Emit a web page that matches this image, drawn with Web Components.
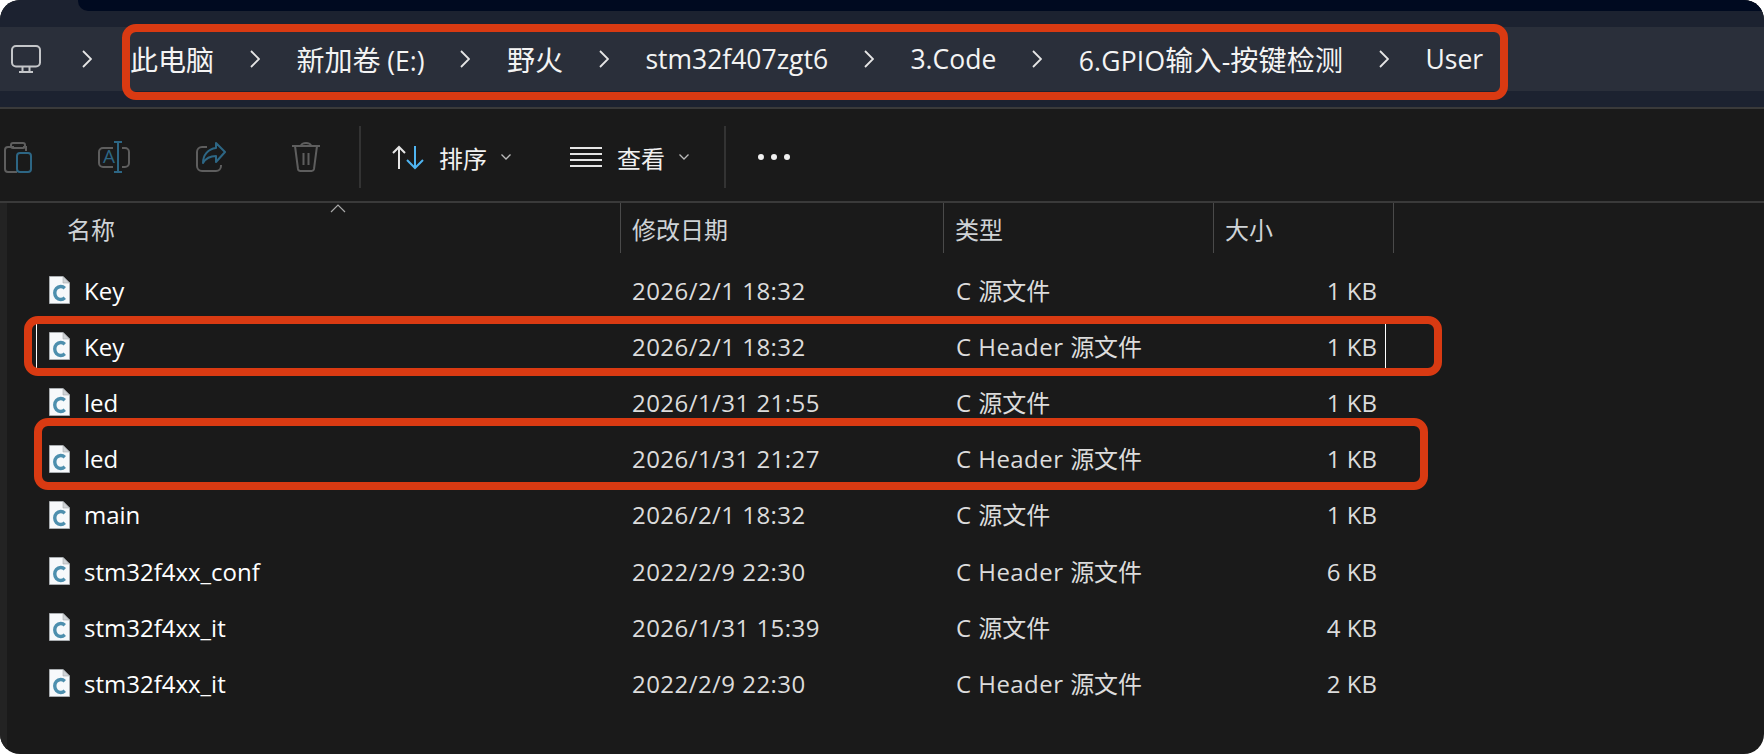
<!doctype html>
<html lang="zh">
<head>
<meta charset="utf-8">
<title>User</title>
<style>
  html, body { margin: 0; background: #fff; }
  body { font-family: "Open Sans", "Noto Sans CJK SC", sans-serif; }
</style>
</head>
<body>
<ex-window>
  <ex-address slot="address">
    <ex-crumb><span class="c">此电脑</span></ex-crumb>
    <ex-crumb><span class="c">新加卷</span> (E:)</ex-crumb>
    <ex-crumb><span class="c">野火</span></ex-crumb>
    <ex-crumb>stm32f407zgt6</ex-crumb>
    <ex-crumb>3.Code</ex-crumb>
    <ex-crumb style="letter-spacing:.2px">6.GPIO<span class="c">输入</span>-<span class="c">按键检测</span></ex-crumb>
    <ex-crumb last>User</ex-crumb>
  </ex-address>
  <ex-toolbar slot="toolbar"></ex-toolbar>
  <ex-files slot="files">
    <ex-row name="Key" date="2026/2/1 18:32" type="C" size="1 KB"></ex-row>
    <ex-row name="Key" date="2026/2/1 18:32" type="C Header" size="1 KB" focused></ex-row>
    <ex-row name="led" date="2026/1/31 21:55" type="C" size="1 KB"></ex-row>
    <ex-row name="led" date="2026/1/31 21:27" type="C Header" size="1 KB"></ex-row>
    <ex-row name="main" date="2026/2/1 18:32" type="C" size="1 KB"></ex-row>
    <ex-row name="stm32f4xx_conf" date="2022/2/9 22:30" type="C Header" size="6 KB"></ex-row>
    <ex-row name="stm32f4xx_it" date="2026/1/31 15:39" type="C" size="4 KB"></ex-row>
    <ex-row name="stm32f4xx_it" date="2022/2/9 22:30" type="C Header" size="2 KB"></ex-row>
  </ex-files>
  <ex-mark slot="marks" x="122" y="24" w="1386" h="76"></ex-mark>
  <ex-mark slot="marks" x="24" y="316" w="1418" h="60"></ex-mark>
  <ex-mark slot="marks" x="34" y="418" w="1394" h="72"></ex-mark>
</ex-window>

<script>
const CJK = '"Noto Sans CJK SC", sans-serif';

class ExWindow extends HTMLElement {
  constructor() {
    super();
    this.attachShadow({ mode: "open" });
    this.shadowRoot.innerHTML = `
      <style>
        :host { display: block; position: relative; width: 1764px; height: 754px; overflow: hidden; border-radius: 20px; background: #1a1a1a; }
        .head { height: 107px; background: #1c2230; }
        .strip { height: 11px; margin-left: 78px; background: #000a20; border-bottom-left-radius: 10px; }
      </style>
      <div class="head">
        <div class="strip"></div>
        <slot name="address"></slot>
      </div>
      <slot name="toolbar"></slot>
      <slot name="files"></slot>
      <slot name="marks"></slot>
    `;
  }
}

class ExAddress extends HTMLElement {
  constructor() {
    super();
    this.attachShadow({ mode: "open" });
    this.shadowRoot.innerHTML = `
      <style>
        :host { display: flex; align-items: center; height: 64px; margin-top: 16px; padding-left: 11px; background: #2a2f3a; }
        .pc { display: block; width: 30px; height: 28px; margin-right: 41px; }
        .chev { display: block; width: 10px; height: 18px; margin-right: 38px; }
      </style>
      <svg class="pc" viewBox="0 0 30 28" fill="none" stroke="#c4c6c9" stroke-width="2">
        <rect x="1" y="1" width="28" height="20.5" rx="4"/>
        <path d="M11.5 22v4M18.5 22v4M8 27h14"/>
      </svg>
      <svg class="chev" viewBox="0 0 10 18" fill="none" stroke="#e6e6e6" stroke-width="1.8"><path d="M1 1l8 8-8 8"/></svg>
      <slot></slot>
    `;
  }
}

class ExCrumb extends HTMLElement {
  constructor() {
    super();
    this.attachShadow({ mode: "open" });
    this.shadowRoot.innerHTML = `
      <style>
        :host { display: flex; align-items: center; color: #f4f4f4; font-size: 26.5px; white-space: pre; }
        ::slotted(.c) { font-family: ${CJK}; font-size: 28px; }
        .chev { display: block; width: 10px; height: 18px; margin: 0 36.7px 0 35.7px; }
        .txt { display: block; }
      </style>
      <span class="txt"><slot></slot></span>
      ${this.hasAttribute("last") ? "" : `<svg class="chev" viewBox="0 0 10 18" fill="none" stroke="#e6e6e6" stroke-width="1.8"><path d="M1 1l8 8-8 8"/></svg>`}
    `;
  }
}

class ExToolbar extends HTMLElement {
  constructor() {
    super();
    this.attachShadow({ mode: "open" });
    const grey = "#5e5e5e";
    const blue = "#2d6684";
    this.shadowRoot.innerHTML = `
      <style>
        :host { display: flex; align-items: center; height: 88px; padding: 4px 0 0 4px; box-sizing: content-box; background: #1a1a1a; border-top: 2px solid #3a3a3a; border-bottom: 2px solid #3a3a3a; color: #f0f0f0; font-size: 24px; font-family: ${CJK}; }
        svg { display: block; flex: none; }
        .ic { margin-right: 66px; }
        .sep { width: 2px; height: 62px; background: #333; flex: none; }
        .lbl { width: 48px; flex: none; white-space: nowrap; }
      </style>
      <svg class="ic" width="28" height="32" viewBox="0 0 28 32" fill="none" stroke-width="2" stroke="${grey}">
        <path d="M10 6H4a3 3 0 0 0-3 3v19a3 3 0 0 0 3 3h9M19 6h3v4"/>
        <rect x="7" y="2" width="14" height="5" rx="2"/>
        <rect x="13" y="12" width="14" height="19" rx="3" stroke="${blue}"/>
      </svg>
      <svg class="ic" width="32" height="32" viewBox="0 0 32 32" fill="none" stroke-width="2" stroke="${grey}">
        <path d="M15 7H5a4 4 0 0 0-4 4v11a4 4 0 0 0 4 4h10M24 7h3a4 4 0 0 1 4 4v11a4 4 0 0 1-4 4h-3"/>
        <path d="M20 1v30M16 1h8M16 31h8" stroke="${blue}"/>
        <text x="11" y="22" text-anchor="middle" font-size="19" font-family="Open Sans" fill="${blue}" stroke="none">A</text>
      </svg>
      <svg class="ic" width="30" height="30" viewBox="0 0 30 30" fill="none" stroke-width="2" stroke="${grey}">
        <path d="M11 5H6a5 5 0 0 0-5 5v14a5 5 0 0 0 5 5h14a5 5 0 0 0 5-5v-1"/>
        <path d="M20 1l9 9-9 10v-6c-6 0-10 2-13 7 0-8 5-14 13-15z" stroke="${blue}" stroke-linejoin="round"/>
      </svg>
      <svg style="margin-right:39px" width="28" height="30" viewBox="0 0 28 30" fill="none" stroke-width="2" stroke="${grey}">
        <path d="M0 4h28M9 4a5 3 0 0 1 10 0M3 4l3 23a2.500 2.500 0 0 0 2.500 2h11a2.500 2.500 0 0 0 2.500-2l3-23M11.500 11v12M16.500 11v12"/>
      </svg>
      <div class="sep" style="margin-right:31px"></div>
      <svg style="margin-right:15px" width="32" height="25" viewBox="0 0 32 25" fill="none" stroke-width="2">
        <path d="M7 24V2M1 8l6-6 6 6" stroke="#e6e6e6"/>
        <path d="M23 1v22M15 15l8 8 8-8" stroke="#4fb4f0"/>
      </svg>
      <div class="lbl">排序</div>
      <svg style="margin:0 59px 0 14px" width="10" height="6" viewBox="0 0 10 6" fill="none" stroke="#bbb" stroke-width="1.300"><path d="M.5.500L5 5 9.500.500"/></svg>
      <svg style="margin-right:15px" width="32" height="20" viewBox="0 0 32 20" fill="none" stroke="#e6e6e6" stroke-width="2"><path d="M0 1h32M0 7h32M0 13h32M0 19h32"/></svg>
      <div class="lbl">查看</div>
      <svg style="margin:0 35px 0 14px" width="10" height="6" viewBox="0 0 10 6" fill="none" stroke="#bbb" stroke-width="1.300"><path d="M.5.500L5 5 9.500.500"/></svg>
      <div class="sep" style="margin-right:32px"></div>
      <svg width="32" height="6" viewBox="0 0 32 6" fill="#f0f0f0"><circle cx="3" cy="3" r="3"/><circle cx="16" cy="3" r="3"/><circle cx="29" cy="3" r="3"/></svg>
    `;
  }
}

class ExFiles extends HTMLElement {
  constructor() {
    super();
    this.attachShadow({ mode: "open" });
    this.shadowRoot.innerHTML = `
      <style>
        :host { display: block; height: 551px; border-left: 7px solid #232323; box-sizing: border-box; color: #d8d8d8; }
        .cols { position: relative; display: grid; grid-template-columns: 614px 323px 270px 180px; height: 50px; margin-bottom: 9px; font-size: 24px; font-family: ${CJK}; color: #cfd3d6; }
        .cols div { display: flex; align-items: center; padding-left: 11px; border-right: 1px solid #4a4a4a; }
        .cols div:first-child { padding-left: 60px; }
        .caret { position: absolute; left: 323px; top: 1px; }
      </style>
      <div class="cols">
        <div>名称</div><div>修改日期</div><div>类型</div><div>大小</div>
        <svg class="caret" width="16" height="9" viewBox="0 0 16 9" fill="none" stroke="#a8a8a8" stroke-width="1.200"><path d="M1 8l7-7 7 7"/></svg>
      </div>
      <slot></slot>
    `;
  }
}

class ExRow extends HTMLElement {
  constructor() {
    super();
    this.attachShadow({ mode: "open" });
  }

  connectedCallback() {
    const name = this.getAttribute("name") || "";
    const date = this.getAttribute("date") || "";
    const type = this.getAttribute("type") || "";
    const size = this.getAttribute("size") || "";
    const focused = this.hasAttribute("focused");

    this.shadowRoot.innerHTML = `
      <style>
        :host { display: grid; position: relative; grid-template-columns: 613px 323px 270px 164px; align-items: center; height: 56.2px; font-size: 24px; color: #dcdcdc; white-space: pre; }
        .name { display: flex; align-items: center; gap: 14px; padding-left: 42px; color: #fff; }
        .date { padding-left: 12px; letter-spacing: .45px; }
        .type { display: flex; align-items: center; padding-left: 13px; letter-spacing: .45px; }
        .zh { font-family: ${CJK}; letter-spacing: 0; margin-top: -2px; }
        .size { text-align: right; }
        svg { display: block; }
        .line { position: absolute; top: 6px; bottom: 6px; width: 1px; background: #fff; }
      </style>
      <div class="name">
        <svg width="21" height="28" viewBox="0 0 21 28">
          <path d="M.5.500H14L20.500 7v20.500H.5z" fill="#f7f9fb" stroke="#a9adb0"/>
          <path d="M14 .5V7h6.500z" fill="#cfd3d6" stroke="#a9adb0" stroke-width=".6"/>
          <path d="M15.800 12.200a6 6.500 0 1 0 0 9.600" fill="none" stroke="#4d8fae" stroke-width="3.400"/>
        </svg>
        <span>${name}</span>
      </div>
      <div class="date">${date}</div>
      <div class="type"><span>${type} </span><span class="zh">源文件</span></div>
      <div class="size">${size}</div>
      ${focused ? `<div class="line" style="left:29px"></div><div class="line" style="left:1378px"></div>` : ""}
    `;
  }
}

class ExMark extends HTMLElement {
  connectedCallback() {
    const root = this.shadowRoot || this.attachShadow({ mode: "open" });
    const get = key => this.getAttribute(key) + "px";
    root.innerHTML = `
      <style>
        :host { display: block; position: absolute; left: ${get("x")}; top: ${get("y")}; width: ${get("w")}; height: ${get("h")}; box-sizing: border-box; border: 8px solid #d93a12; border-radius: 14px; }
      </style>
    `;
  }
}

customElements.define("ex-window", ExWindow);
customElements.define("ex-address", ExAddress);
customElements.define("ex-crumb", ExCrumb);
customElements.define("ex-toolbar", ExToolbar);
customElements.define("ex-files", ExFiles);
customElements.define("ex-row", ExRow);
customElements.define("ex-mark", ExMark);
</script>
</body>
</html>
